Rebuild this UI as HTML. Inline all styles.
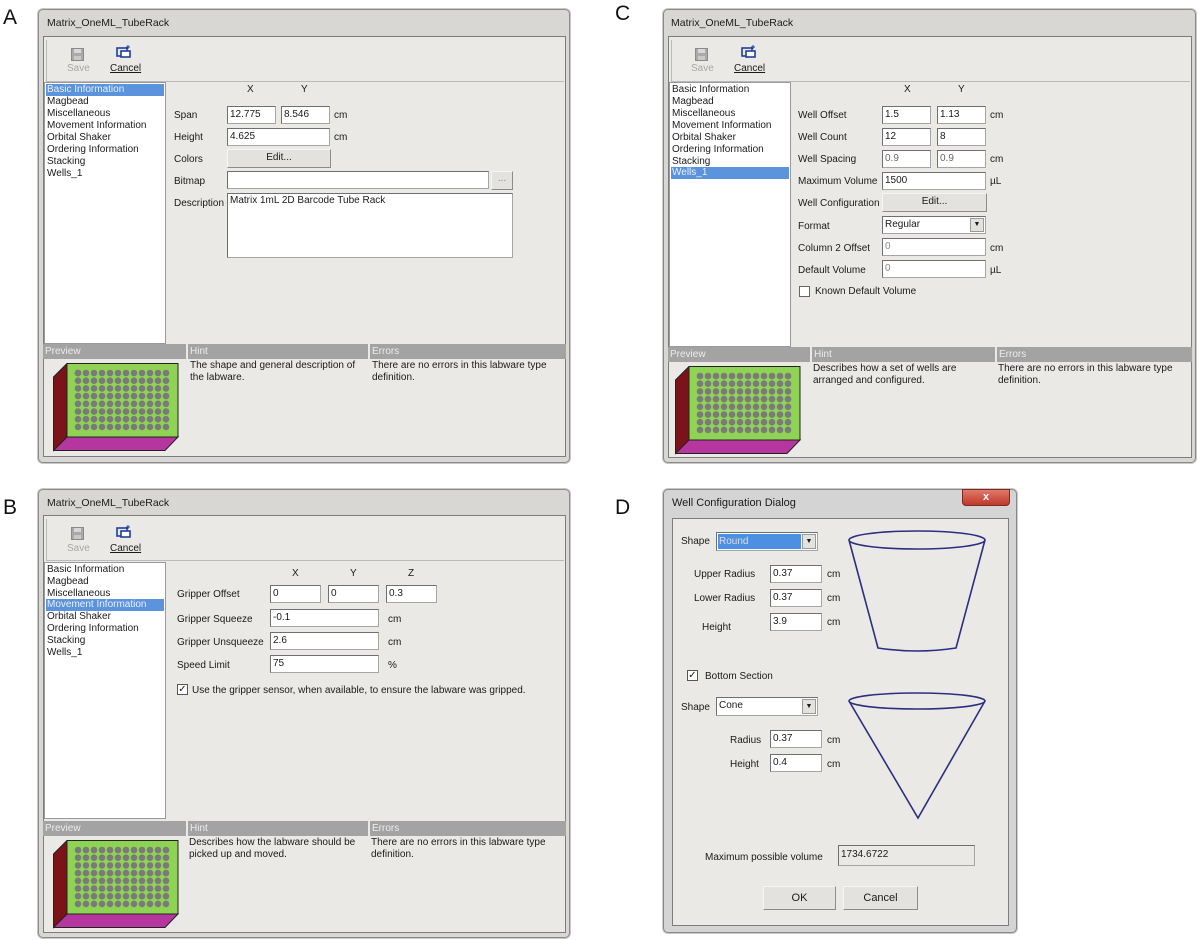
<!DOCTYPE html>
<html><head><meta charset="utf-8">
<style>
*{box-sizing:border-box;margin:0;padding:0}
body{width:1200px;height:940px;background:#fff;position:relative;overflow:hidden;font-family:"Liberation Sans",sans-serif;font-size:10px;color:#1a1a1a}
.a{position:absolute;white-space:nowrap}
.win{position:absolute;background:#d9d7d4;border:1px solid #8a8a8a;border-radius:5px;box-shadow:0 0 0 1px #c8c8c8}
.inner{position:absolute;background:#ebe9e5;border:1px solid #7d7d7d}
.tb{position:absolute;border-bottom:1px solid #b9b9b9;border-left:1px solid #bbb}
.list{position:absolute;background:#fff;border:1px solid #9a9a9a}
.li{position:absolute;left:2px;height:12px;line-height:12px;white-space:nowrap;font-size:10px}
.sel{background:#5b93dc;color:#e8f0ff;left:1px;right:1px;padding-left:1px}
.bar{position:absolute;height:15px;background:#a3a3a3;color:#ececec;font-size:10px;line-height:15px;padding-left:2px}
.in{position:absolute;background:#fff;border:1px solid #a5a5a5;border-top-color:#6f6f6f;border-left-color:#6f6f6f;height:18px;line-height:15px;padding-left:2px;font-size:10px}
.btn{position:absolute;background:#e4e2de;border:1px solid #8c8c8c;border-top-color:#f5f5f5;border-left-color:#f5f5f5;text-align:center;line-height:16px;font-size:10px}
.lab{position:absolute;white-space:nowrap;font-size:10px}
.hint{position:absolute;font-size:10px;line-height:12px}
.big{position:absolute;font-size:21px;color:#111}
</style></head><body>

<div class="big" style="left:3px;top:6px">A</div>
<div class="big" style="left:3px;top:496px">B</div>
<div class="big" style="left:615px;top:2px">C</div>
<div class="big" style="left:615px;top:496px">D</div>

<!-- ===== A ===== -->
<div class="win" style="left:38px;top:9px;width:532px;height:454px"></div>
<div class="a" style="left:47px;top:17px;font-size:10.5px">Matrix_OneML_TubeRack</div>
<div class="inner" style="left:43px;top:36px;width:523px;height:421px"></div>
<div class="tb" style="left:46px;top:40px;width:518px;height:42px"></div>
<svg class="a" style="left:71px;top:48px" width="14" height="13"><rect x="0.5" y="0.5" width="12" height="12" fill="#a9a9a9" stroke="#8a8a8a"/><rect x="3" y="1" width="7" height="4" fill="#d8d8d8"/><rect x="3" y="8" width="7" height="4" fill="#c9c9c9"/></svg>
<div class="a" style="left:67px;top:63px;color:#a8a8a8">Save</div>
<svg class="a" style="left:116px;top:45px" width="16" height="13"><rect x="1" y="3" width="10" height="8" fill="none" stroke="#1e3f9e" stroke-width="1.6"/><rect x="5" y="6" width="9" height="6" fill="#fff" stroke="#1e3f9e" stroke-width="1.6"/><path d="M12 0v4M10 2h4" stroke="#1e3f9e"/></svg>
<div class="a" style="left:110px;top:63px;text-decoration:underline">Cancel</div>
<div class="list" style="left:44px;top:82px;width:122px;height:262px">
<div class="li sel" style="top:1px">Basic Information</div>
<div class="li" style="top:13px">Magbead</div>
<div class="li" style="top:25px">Miscellaneous</div>
<div class="li" style="top:37px">Movement Information</div>
<div class="li" style="top:49px">Orbital Shaker</div>
<div class="li" style="top:61px">Ordering Information</div>
<div class="li" style="top:73px">Stacking</div>
<div class="li" style="top:85px">Wells_1</div>
</div>
<div class="lab" style="left:247px;top:84px">X</div>
<div class="lab" style="left:301px;top:84px">Y</div>
<div class="lab" style="left:174px;top:110px">Span</div>
<div class="in" style="left:227px;top:106px;width:49px">12.775</div>
<div class="in" style="left:281px;top:106px;width:49px">8.546</div>
<div class="lab" style="left:334px;top:110px">cm</div>
<div class="lab" style="left:174px;top:132px">Height</div>
<div class="in" style="left:227px;top:128px;width:103px">4.625</div>
<div class="lab" style="left:334px;top:132px">cm</div>
<div class="lab" style="left:174px;top:154px">Colors</div>
<div class="btn" style="left:227px;top:149px;width:104px;height:19px">Edit...</div>
<div class="lab" style="left:174px;top:176px">Bitmap</div>
<div class="in" style="left:227px;top:171px;width:262px"></div>
<div class="btn" style="left:491px;top:171px;width:22px;height:19px;line-height:14px;color:#888">...</div>
<div class="lab" style="left:174px;top:198px">Description</div>
<div class="in" style="left:227px;top:193px;width:286px;height:65px;line-height:14px">Matrix 1mL 2D Barcode Tube Rack</div>
<div class="bar" style="left:43px;top:344px;width:143px">Preview</div>
<div class="bar" style="left:188px;top:344px;width:180px">Hint</div>
<div class="bar" style="left:370px;top:344px;width:196px">Errors</div>
<div class="hint" style="left:190px;top:360px;width:180px">The shape and general description of the labware.</div>
<div class="hint" style="left:372px;top:360px;width:190px">There are no errors in this labware type definition.</div>
<svg class="a" style="left:53px;top:363px" width="127" height="89"><g stroke="#222" stroke-width="1"><polygon points="0.5,14 14,0.5 14,74 0.5,87.5" fill="#7a1418"/><polygon points="0.5,87.5 14,74 125,74 112,87.5" fill="#b5369f"/><rect x="14" y="0.5" width="111" height="73.5" fill="#8fd354"/></g><g fill="#7a7a7a" id="dA"><circle cx="25" cy="10" r="3.3"/></g></svg>

<!-- ===== B ===== -->
<div class="win" style="left:38px;top:489px;width:532px;height:449px"></div>
<div class="a" style="left:47px;top:497px;font-size:10.5px">Matrix_OneML_TubeRack</div>
<div class="inner" style="left:43px;top:515px;width:523px;height:418px"></div>
<div class="tb" style="left:46px;top:519px;width:518px;height:42px"></div>
<svg class="a" style="left:71px;top:527px" width="14" height="13"><rect x="0.5" y="0.5" width="12" height="12" fill="#a9a9a9" stroke="#8a8a8a"/><rect x="3" y="1" width="7" height="4" fill="#d8d8d8"/><rect x="3" y="8" width="7" height="4" fill="#c9c9c9"/></svg>
<div class="a" style="left:67px;top:543px;color:#a8a8a8">Save</div>
<svg class="a" style="left:116px;top:525px" width="16" height="13"><rect x="1" y="3" width="10" height="8" fill="none" stroke="#1e3f9e" stroke-width="1.6"/><rect x="5" y="6" width="9" height="6" fill="#fff" stroke="#1e3f9e" stroke-width="1.6"/><path d="M12 0v4M10 2h4" stroke="#1e3f9e"/></svg>
<div class="a" style="left:110px;top:543px;text-decoration:underline">Cancel</div>
<div class="list" style="left:44px;top:562px;width:122px;height:257px">
<div class="li" style="top:1px">Basic Information</div>
<div class="li" style="top:13px">Magbead</div>
<div class="li" style="top:25px">Miscellaneous</div>
<div class="li sel" style="top:36px">Movement Information</div>
<div class="li" style="top:48px">Orbital Shaker</div>
<div class="li" style="top:60px">Ordering Information</div>
<div class="li" style="top:72px">Stacking</div>
<div class="li" style="top:84px">Wells_1</div>
</div>
<div class="lab" style="left:292px;top:568px">X</div>
<div class="lab" style="left:350px;top:568px">Y</div>
<div class="lab" style="left:408px;top:568px">Z</div>
<div class="lab" style="left:177px;top:589px">Gripper Offset</div>
<div class="in" style="left:270px;top:585px;width:51px">0</div>
<div class="in" style="left:328px;top:585px;width:51px">0</div>
<div class="in" style="left:386px;top:585px;width:51px">0.3</div>
<div class="lab" style="left:177px;top:614px">Gripper Squeeze</div>
<div class="in" style="left:270px;top:609px;width:109px">-0.1</div>
<div class="lab" style="left:388px;top:614px">cm</div>
<div class="lab" style="left:177px;top:637px">Gripper Unsqueeze</div>
<div class="in" style="left:270px;top:632px;width:109px">2.6</div>
<div class="lab" style="left:388px;top:637px">cm</div>
<div class="lab" style="left:177px;top:660px">Speed Limit</div>
<div class="in" style="left:270px;top:655px;width:109px">75</div>
<div class="lab" style="left:388px;top:660px">%</div>
<div class="a" style="left:177px;top:684px;width:11px;height:11px;border:1px solid #555;background:#fff;font-size:10px;line-height:9px;text-align:center">✓</div>
<div class="lab" style="left:192px;top:685px">Use the gripper sensor, when available, to ensure the labware was gripped.</div>
<div class="bar" style="left:43px;top:821px;width:143px">Preview</div>
<div class="bar" style="left:188px;top:821px;width:180px">Hint</div>
<div class="bar" style="left:370px;top:821px;width:196px">Errors</div>
<div class="hint" style="left:189px;top:837px;width:180px">Describes how the labware should be picked up and moved.</div>
<div class="hint" style="left:371px;top:837px;width:190px">There are no errors in this labware type definition.</div>
<svg class="a" style="left:53px;top:840px" width="127" height="89"><g stroke="#222" stroke-width="1"><polygon points="0.5,14 14,0.5 14,74 0.5,87.5" fill="#7a1418"/><polygon points="0.5,87.5 14,74 125,74 112,87.5" fill="#b5369f"/><rect x="14" y="0.5" width="111" height="73.5" fill="#8fd354"/></g><g fill="#7a7a7a" class="dots"></g></svg>

<!-- ===== C ===== -->
<div class="win" style="left:663px;top:9px;width:533px;height:454px"></div>
<div class="a" style="left:671px;top:17px;font-size:10.5px">Matrix_OneML_TubeRack</div>
<div class="inner" style="left:668px;top:36px;width:524px;height:422px"></div>
<div class="tb" style="left:671px;top:40px;width:519px;height:42px"></div>
<svg class="a" style="left:695px;top:48px" width="14" height="13"><rect x="0.5" y="0.5" width="12" height="12" fill="#a9a9a9" stroke="#8a8a8a"/><rect x="3" y="1" width="7" height="4" fill="#d8d8d8"/><rect x="3" y="8" width="7" height="4" fill="#c9c9c9"/></svg>
<div class="a" style="left:691px;top:63px;color:#a8a8a8">Save</div>
<svg class="a" style="left:741px;top:45px" width="16" height="13"><rect x="1" y="3" width="10" height="8" fill="none" stroke="#1e3f9e" stroke-width="1.6"/><rect x="5" y="6" width="9" height="6" fill="#fff" stroke="#1e3f9e" stroke-width="1.6"/><path d="M12 0v4M10 2h4" stroke="#1e3f9e"/></svg>
<div class="a" style="left:734px;top:63px;text-decoration:underline">Cancel</div>
<div class="list" style="left:669px;top:82px;width:122px;height:265px">
<div class="li" style="top:1px">Basic Information</div>
<div class="li" style="top:13px">Magbead</div>
<div class="li" style="top:25px">Miscellaneous</div>
<div class="li" style="top:37px">Movement Information</div>
<div class="li" style="top:49px">Orbital Shaker</div>
<div class="li" style="top:61px">Ordering Information</div>
<div class="li" style="top:73px">Stacking</div>
<div class="li sel" style="top:84px">Wells_1</div>
</div>
<div class="lab" style="left:904px;top:84px">X</div>
<div class="lab" style="left:958px;top:84px">Y</div>
<div class="lab" style="left:798px;top:110px">Well Offset</div>
<div class="in" style="left:882px;top:106px;width:49px">1.5</div>
<div class="in" style="left:937px;top:106px;width:49px">1.13</div>
<div class="lab" style="left:990px;top:110px">cm</div>
<div class="lab" style="left:798px;top:132px">Well Count</div>
<div class="in" style="left:882px;top:128px;width:49px">12</div>
<div class="in" style="left:937px;top:128px;width:49px">8</div>
<div class="lab" style="left:798px;top:154px">Well Spacing</div>
<div class="in" style="left:882px;top:150px;width:49px;color:#666">0.9</div>
<div class="in" style="left:937px;top:150px;width:49px;color:#666">0.9</div>
<div class="lab" style="left:990px;top:154px">cm</div>
<div class="lab" style="left:798px;top:176px">Maximum Volume</div>
<div class="in" style="left:882px;top:172px;width:104px">1500</div>
<div class="lab" style="left:990px;top:176px">µL</div>
<div class="lab" style="left:798px;top:198px">Well Configuration</div>
<div class="btn" style="left:882px;top:193px;width:105px;height:19px">Edit...</div>
<div class="lab" style="left:798px;top:221px">Format</div>
<div class="in" style="left:882px;top:216px;width:104px">Regular<span style="position:absolute;right:1px;top:1px;width:14px;height:14px;background:#e4e2de;border:1px solid #999;font-size:7px;line-height:12px;text-align:center">▼</span></div>
<div class="lab" style="left:798px;top:243px">Column 2 Offset</div>
<div class="in" style="left:882px;top:238px;width:104px;color:#888">0</div>
<div class="lab" style="left:990px;top:243px">cm</div>
<div class="lab" style="left:798px;top:265px">Default Volume</div>
<div class="in" style="left:882px;top:260px;width:104px;color:#888">0</div>
<div class="lab" style="left:990px;top:265px">µL</div>
<div class="a" style="left:799px;top:286px;width:11px;height:11px;border:1px solid #666;background:#fff"></div>
<div class="lab" style="left:815px;top:286px">Known Default Volume</div>
<div class="bar" style="left:668px;top:347px;width:142px">Preview</div>
<div class="bar" style="left:812px;top:347px;width:183px">Hint</div>
<div class="bar" style="left:997px;top:347px;width:195px">Errors</div>
<div class="hint" style="left:813px;top:363px;width:180px">Describes how a set of wells are arranged and configured.</div>
<div class="hint" style="left:998px;top:363px;width:190px">There are no errors in this labware type definition.</div>
<svg class="a" style="left:675px;top:366px" width="127" height="89"><g stroke="#222" stroke-width="1"><polygon points="0.5,14 14,0.5 14,74 0.5,87.5" fill="#7a1418"/><polygon points="0.5,87.5 14,74 125,74 112,87.5" fill="#b5369f"/><rect x="14" y="0.5" width="111" height="73.5" fill="#8fd354"/></g><g fill="#7a7a7a" class="dots"></g></svg>

<!-- ===== D ===== -->
<div class="win" style="left:663px;top:489px;width:354px;height:444px;background:#d4d4d4"></div>
<div class="a" style="left:672px;top:497px;font-size:11px">Well Configuration Dialog</div>
<div class="a" style="left:962px;top:489px;width:48px;height:17px;background:linear-gradient(#e07a6a,#c0382a);border:1px solid #7a2a20;border-radius:0 0 4px 4px;color:#fff;text-align:center;font-weight:bold;font-size:11px;line-height:15px">x</div>
<div class="inner" style="left:672px;top:518px;width:337px;height:408px;background:#ebe9e5"></div>
<div class="lab" style="left:681px;top:536px">Shape</div>
<div class="in" style="left:716px;top:532px;width:102px;height:19px"><span style="position:absolute;left:1px;top:1px;width:83px;height:15px;background:#4d8fe0;color:#dde;padding-left:1px">Round</span><span style="position:absolute;right:1px;top:1px;width:14px;height:15px;background:#e4e2de;border:1px solid #999;font-size:7px;line-height:13px;text-align:center">▼</span></div>
<div class="lab" style="left:694px;top:569px">Upper Radius</div>
<div class="in" style="left:770px;top:565px;width:52px">0.37</div>
<div class="lab" style="left:827px;top:569px">cm</div>
<div class="lab" style="left:694px;top:593px">Lower Radius</div>
<div class="in" style="left:770px;top:589px;width:52px">0.37</div>
<div class="lab" style="left:827px;top:593px">cm</div>
<div class="lab" style="left:702px;top:622px">Height</div>
<div class="in" style="left:770px;top:613px;width:52px">3.9</div>
<div class="lab" style="left:827px;top:617px">cm</div>
<div class="a" style="left:687px;top:670px;width:11px;height:11px;border:1px solid #555;background:#fff;font-size:10px;line-height:9px;text-align:center">✓</div>
<div class="lab" style="left:705px;top:671px">Bottom Section</div>
<div class="lab" style="left:681px;top:702px">Shape</div>
<div class="in" style="left:716px;top:697px;width:102px;height:19px">Cone<span style="position:absolute;right:1px;top:1px;width:14px;height:15px;background:#e4e2de;border:1px solid #999;font-size:7px;line-height:13px;text-align:center">▼</span></div>
<div class="lab" style="left:730px;top:735px">Radius</div>
<div class="in" style="left:770px;top:730px;width:52px">0.37</div>
<div class="lab" style="left:827px;top:735px">cm</div>
<div class="lab" style="left:730px;top:759px">Height</div>
<div class="in" style="left:770px;top:754px;width:52px">0.4</div>
<div class="lab" style="left:827px;top:759px">cm</div>
<svg class="a" style="left:840px;top:520px" width="160" height="310"><g fill="none" stroke="#2a2f80" stroke-width="1.6"><ellipse cx="77" cy="20" rx="68" ry="9"/><path d="M9 20 L38 128 Q77 134 116 128 L145 20"/><ellipse cx="77" cy="181" rx="68" ry="8"/><path d="M9 181 L78 298 L145 181"/></g></svg>
<div class="lab" style="left:705px;top:852px">Maximum possible volume</div>
<div class="in" style="left:838px;top:845px;width:137px;height:21px;background:#ebe9e5;line-height:17px">1734.6722</div>
<div class="btn" style="left:763px;top:886px;width:73px;height:24px;line-height:22px;font-size:11px">OK</div>
<div class="btn" style="left:843px;top:886px;width:75px;height:24px;line-height:22px;font-size:11px">Cancel</div>

<!-- dots (static) -->
<svg class="a" style="left:53px;top:363px" width="127" height="89"><g fill="#7a7a7a">
<g id="row"><circle cx="25" cy="10" r="3.3"/><circle cx="33" cy="10" r="3.3"/><circle cx="41" cy="10" r="3.3"/><circle cx="49" cy="10" r="3.3"/><circle cx="57" cy="10" r="3.3"/><circle cx="65" cy="10" r="3.3"/><circle cx="73" cy="10" r="3.3"/><circle cx="81" cy="10" r="3.3"/><circle cx="89" cy="10" r="3.3"/><circle cx="97" cy="10" r="3.3"/><circle cx="105" cy="10" r="3.3"/><circle cx="113" cy="10" r="3.3"/></g>
<use href="#row" y="7.7"/><use href="#row" y="15.4"/><use href="#row" y="23.1"/><use href="#row" y="30.8"/><use href="#row" y="38.5"/><use href="#row" y="46.2"/><use href="#row" y="53.9"/></g></svg>
<svg class="a" style="left:53px;top:840px" width="127" height="89"><g fill="#7a7a7a"><use href="#row"/><use href="#row" y="7.7"/><use href="#row" y="15.4"/><use href="#row" y="23.1"/><use href="#row" y="30.8"/><use href="#row" y="38.5"/><use href="#row" y="46.2"/><use href="#row" y="53.9"/></g></svg>
<svg class="a" style="left:675px;top:366px" width="127" height="89"><g fill="#7a7a7a"><use href="#row"/><use href="#row" y="7.7"/><use href="#row" y="15.4"/><use href="#row" y="23.1"/><use href="#row" y="30.8"/><use href="#row" y="38.5"/><use href="#row" y="46.2"/><use href="#row" y="53.9"/></g></svg>
</body></html>
